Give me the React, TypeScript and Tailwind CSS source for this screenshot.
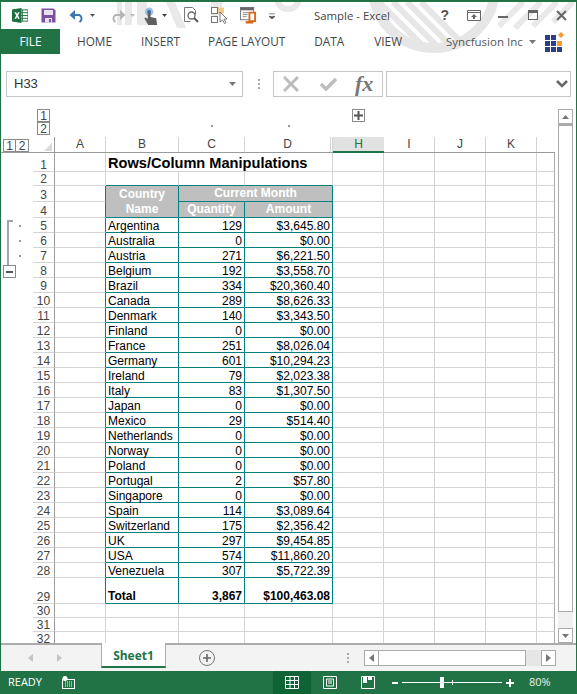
import React from 'react';

const uiFont = "font-['Open_Sans','Noto_Sans',sans-serif]";
const GRID = 'grid grid-rows-[minmax(0,1fr)] grid-cols-[32px_22px_51px_73px_66px_88px_51px_51px_51px_51px_18px]';

const countries: [string, string, string][] = [
  ['Argentina', '129', '$3,645.80'],
  ['Australia', '0', '$0.00'],
  ['Austria', '271', '$6,221.50'],
  ['Belgium', '192', '$3,558.70'],
  ['Brazil', '334', '$20,360.40'],
  ['Canada', '289', '$8,626.33'],
  ['Denmark', '140', '$3,343.50'],
  ['Finland', '0', '$0.00'],
  ['France', '251', '$8,026.04'],
  ['Germany', '601', '$10,294.23'],
  ['Ireland', '79', '$2,023.38'],
  ['Italy', '83', '$1,307.50'],
  ['Japan', '0', '$0.00'],
  ['Mexico', '29', '$514.40'],
  ['Netherlands', '0', '$0.00'],
  ['Norway', '0', '$0.00'],
  ['Poland', '0', '$0.00'],
  ['Portugal', '2', '$57.80'],
  ['Singapore', '0', '$0.00'],
  ['Spain', '114', '$3,089.64'],
  ['Switzerland', '175', '$2,356.42'],
  ['UK', '297', '$9,454.85'],
  ['USA', '574', '$11,860.20'],
  ['Venezuela', '307', '$5,722.39'],
];

function Caret({ className = '' }: { className?: string }) {
  return (
    <svg width="7" height="4" viewBox="0 0 7 4" className={className}>
      <path d="M0 0h7L3.500 4z" fill="currentColor" />
    </svg>
  );
}

function Watermark() {
  return (
    <svg width="575" height="52" viewBox="0 0 575 52" className="absolute left-0 top-0">
      <defs>
        <clipPath id="ring">
          <circle cx="433" cy="-15" r="58" />
        </clipPath>
      </defs>
      <g fill="#e9e9e9">
        <rect x="116" y="0" width="5" height="23" />
        <rect x="124" y="0" width="7" height="23" />
        <rect x="136" y="0" width="10" height="23" />
        <path d="M165 0h9l11 26h-9zM210 0h12l-6 18h-6z" />
      </g>
      <circle cx="287" cy="-4" r="11" fill="none" stroke="#e9e9e9" strokeWidth="6" />
      <circle cx="433" cy="-15" r="61" fill="none" stroke="#e6e6e6" strokeWidth="10" />
      <g clipPath="url(#ring)" stroke="#e6e6e6" strokeWidth="6">
        <path d="M378 0l50 50M392 0l50 50M406 0l50 50M420 0l50 50" />
      </g>
      <g stroke="#e9e9e9" strokeWidth="6">
        <path d="M522 0l-24 24M540 0l-26 26M556 0l-24 24M572 0l-20 20" />
      </g>
    </svg>
  );
}

function TitleBar() {
  return (
    <div className="relative z-10 h-[27px] flex items-center text-[#444]">
      <div className="flex items-center pl-[11px]">
        {/* excel logo */}
        <svg width="16" height="15" viewBox="0 0 17 16">
          <rect x="6" y="2" width="11" height="12" fill="#fff" stroke="#217346" />
          <path d="M11 2v12M6 5h11M6 8h11M6 11h11" stroke="#217346" strokeWidth="1" />
          <path d="M0 1.500L10 0v16L0 14.500z" fill="#1d6f42" />
          <path d="M2.600 4.500h1.800l1 2.100 1-2.100h1.700L6.400 8l1.800 3.500H6.400l-1-2.200-1 2.200H2.600L4.500 8z" fill="#fff" />
        </svg>
        <svg width="15" height="15" viewBox="0 0 15 15" className="ml-[13px]">
          <path d="M0.500 0.500h12l2 2v12h-14z" fill="#7c4f9f" />
          <rect x="3" y="2" width="9" height="5" fill="#e9e0f0" />
          <rect x="4" y="10" width="7" height="4.500" fill="#e9e0f0" />
          <rect x="8" y="11" width="2" height="3" fill="#7c4f9f" />
        </svg>
        <svg width="16" height="14" viewBox="0 0 16 14" className="ml-[13px]">
          <path d="M4 6h6.500a4 4 0 0 1 0 7" fill="none" stroke="#3a78b5" strokeWidth="2" />
          <path d="M0.500 6L6 1v10z" fill="#3a78b5" />
        </svg>
        <Caret className="ml-[5px] w-[5px] h-[3px] text-[#555]" />
        <svg width="16" height="14" viewBox="0 0 16 14" className="ml-[15px]">
          <path d="M12 6H5.500a4 4 0 0 0 0 7" fill="none" stroke="#b5b5b5" strokeWidth="2" />
          <path d="M15.500 6L10 1v10z" fill="#b5b5b5" />
        </svg>
        <Caret className="ml-[4px] w-[5px] h-[3px] text-[#bbb]" />
        <svg width="16" height="18" viewBox="0 0 16 19" className="ml-[8px]">
          <circle cx="6" cy="5" r="4.500" fill="#9cc3e6" />
          <circle cx="6" cy="5" r="2" fill="#3a78b5" />
          <path d="M4.500 5h3v5.500l6 1.500 1 7H5L1 12l1-1 2.500 1.500z" fill="#5f5f5f" />
        </svg>
        <Caret className="ml-[3px] w-[5px] h-[3px] text-[#444]" />
        {/* print preview */}
        <svg width="15" height="17" viewBox="0 0 15 17" className="ml-[17px]">
          <path d="M0.500 0.500h8l3 3v4M0.500 0.500v14h6" fill="none" stroke="#777" />
          <circle cx="7.500" cy="8.500" r="3.500" fill="#fff" stroke="#666" strokeWidth="1.300" />
          <path d="M10 11l4 4" stroke="#555" strokeWidth="2" />
        </svg>
        {/* select cells */}
        <svg width="17" height="17" viewBox="0 0 17 17" className="ml-[12px]">
          <rect x="0.500" y="0.500" width="6" height="6" fill="#fff" stroke="#777" />
          <rect x="0.500" y="9.500" width="6" height="6" fill="#fff" stroke="#777" />
          <rect x="7" y="0.500" width="6" height="6" fill="#f4c98d" />
          <path d="M9 5v10l2.500-2 2 3.500 1.500-1-2-3.200 3-.3z" fill="#fff" stroke="#555" strokeWidth="0.800" />
        </svg>
        {/* form */}
        <svg width="17" height="17" viewBox="0 0 18 18" className="ml-[12px]">
          <rect x="0.500" y="0.500" width="14" height="13" fill="#fff" stroke="#777" />
          <rect x="0.500" y="0.500" width="14" height="3" fill="#666" />
          <path d="M3 6h6M3 8h5M3 10h4" stroke="#888" />
          <path d="M10 6h6v9h-6z" fill="#fff" stroke="#d9671c" strokeWidth="2" />
          <path d="M6 15h8v2.500H6z" fill="#d9671c" />
        </svg>
        <svg width="6" height="6" viewBox="0 0 7 7" className="ml-[12px] text-[#555]">
          <path d="M0 1h7M0 4h7L3.500 7z" stroke="currentColor" fill="currentColor" strokeWidth="0.800" />
        </svg>
      </div>
      <span className={`absolute left-[313px] top-[6px] text-[11.4px] leading-4 text-[#444] ${uiFont}`}>Sample - Excel</span>
      <span className="absolute right-[127px] top-[3px] text-[14px] font-bold text-[#555] font-['Liberation_Sans',sans-serif]">?</span>
      <svg width="14" height="11" viewBox="0 0 14 11" className="absolute right-[95px] top-[8px]">
        <path d="M0.500 0.500h13v10h-13zM0.500 2.500h13" fill="none" stroke="#666" />
        <path d="M7 4l-3 3h2v2h2V7h2z" fill="#666" />
      </svg>
      <div className="absolute right-[68px] top-[14px] w-[10px] h-[2px] bg-[#666]" />
      <div className="absolute right-[38px] top-[8px] w-[10px] h-[10px] border border-t-[3px] border-[#666]" />
      <svg width="11" height="11" viewBox="0 0 11 11" className="absolute right-[9px] top-[8px]">
        <path d="M1 1l9 9M10 1l-9 9" stroke="#666" strokeWidth="2" />
      </svg>
    </div>
  );
}

function RibbonTabs() {
  return (
    <div className={`relative z-10 h-[25px] flex items-center text-[11.8px] text-[#444] ${uiFont}`}>
      <div className="w-[59px] h-full bg-[#217346] text-white flex items-center justify-center">FILE</div>
      <span className="ml-[17px]">HOME</span>
      <span className="ml-[29px]">INSERT</span>
      <span className="ml-[28px]">PAGE LAYOUT</span>
      <span className="ml-[29px]">DATA</span>
      <span className="ml-[30px]">VIEW</span>
      <span className="ml-[44px] text-[11.5px] text-[#555]">Syncfusion Inc</span>
      <Caret className="ml-[6px] text-[#777]" />
      <svg width="20" height="20" viewBox="0 0 20 20" className="ml-[9px]">
        <path d="M0 3h5v5H0zM6 3h5v5H6zM0 9h5v5H0zM6 9h5v5H6zM0 15h5v5H0zM6 15h5v5H6zM12 15h5v5h-5z" fill="#2a3f86" />
        <path d="M12 9h5v5h-5z" fill="#f39c2a" />
        <path d="M16 0l3 3-3 3-3-3z" fill="#f39c2a" />
      </svg>
    </div>
  );
}

function FormulaBar() {
  return (
    <div className="h-[26px] mt-[17px] flex text-[#444]">
      <div className="ml-[5px] w-[237px] border border-[#c6c6c6] flex items-center justify-between pl-[7px] pr-[6px]">
        <span className="text-[13px] text-[#333] font-['Liberation_Sans',sans-serif]">H33</span>
        <Caret className="text-[#777]" />
      </div>
      <div className="ml-[14px] w-[3px] flex flex-col items-center justify-center gap-[2px]">
        <div className="w-[2px] h-[2px] bg-[#aaa]" />
        <div className="w-[2px] h-[2px] bg-[#aaa]" />
        <div className="w-[2px] h-[2px] bg-[#aaa]" />
      </div>
      <div className="ml-[13px] w-[110px] border border-[#c6c6c6] flex items-center">
        <svg width="16" height="16" viewBox="0 0 16 16" className="ml-[9px]">
          <path d="M1 1l14 14M15 1L1 15" stroke="#bdbdbd" strokeWidth="3" />
        </svg>
        <svg width="19" height="15" viewBox="0 0 19 15" className="ml-[20px]">
          <path d="M2 7l5 5L17 2" fill="none" stroke="#bdbdbd" strokeWidth="3.500" />
        </svg>
        <span className="ml-[17px] text-[22px] leading-none italic font-bold text-[#777] font-['Liberation_Serif',serif]">fx</span>
      </div>
      <div className="ml-[3px] w-[185px] border border-[#c6c6c6] flex items-center justify-end pr-[2px]">
        <svg width="12" height="8" viewBox="0 0 12 8">
          <path d="M1 1l5 5 5-5" fill="none" stroke="#666" strokeWidth="2.500" />
        </svg>
      </div>
    </div>
  );
}

const line = 'border-r border-b border-[#d4d4d4]';
const edge = 'border-b border-b-[#d4d4d4] border-r border-r-[#008080]';
const teal = 'border-r border-r-[#008080] border-b border-b-[#008080]';

function RowHead({ n }: { n: number }) {
  return (
    <div className="border-r border-r-[#9b9b9b] border-b border-b-[#d4d4d4] flex items-end justify-center text-[12px] leading-[12px] text-[#444]">
      {n}
    </div>
  );
}

function Blanks() {
  return (
    <>
      <div className={line} />
      <div className={line} />
      <div className={line} />
      <div className={line} />
      <div className="border-b border-b-[#d4d4d4] border-r border-r-[#ababab]" />
    </>
  );
}

function ColHead({ label, className = '' }: { label: string; className?: string }) {
  return <div className={`border-r border-[#d4d4d4] text-center text-[12px] leading-[15px] text-[#444] ${className}`}>{label}</div>;
}

function Gutter({ dot, minus }: { dot?: boolean; minus?: boolean }) {
  return (
    <div className="relative flex items-center justify-end">
      {dot && <div className="mr-[12px] w-[2px] h-[2px] bg-[#999]" />}
      {minus && (
        <div className="absolute left-[2px] top-[2px] w-[13px] h-[13px] border border-[#8a8a8a] flex items-center justify-center">
          <div className="w-[7px] h-[2px] bg-[#555]" />
        </div>
      )}
    </div>
  );
}

function Sheet() {
  return (
    <div className="w-[554px] h-full overflow-hidden font-['Liberation_Sans',sans-serif] text-[12px] text-black">
      {/* column outline levels */}
      <div className={`${GRID} h-[28px]`}>
        <div className="col-span-2 flex flex-col items-end pr-[5px]">
          <div className="w-[13px] h-[13px] border border-[#8a8a8a] text-[12px] leading-[12px] text-center text-[#444]">1</div>
          <div className="w-[13px] h-[13px] border border-[#8a8a8a] text-[12px] leading-[12px] text-center text-[#444]">2</div>
        </div>
        <div />
        <div />
        <div className="flex items-end justify-center pb-[10px]"><div className="w-[2px] h-[2px] bg-[#999]" /></div>
        <div className="flex items-end justify-center pb-[10px]"><div className="w-[2px] h-[2px] bg-[#999]" /></div>
        <div>
          <div className="w-[13px] h-[13px] ml-[19px] border border-[#8a8a8a] flex items-center justify-center">
            <svg width="9" height="9" viewBox="0 0 9 9"><path d="M4.500 0v9M0 4.500h9" stroke="#555" strokeWidth="2" /></svg>
          </div>
        </div>
      </div>
      {/* column headers */}
      <div className={`${GRID} h-[16px] border-b border-[#9b9b9b]`}>
        <div className="flex items-start pl-[2px] pt-[2px]">
          <div className="w-[13px] h-[13px] border border-[#8a8a8a] text-[12px] leading-[12px] text-center text-[#444]">1</div>
          <div className="w-[13px] h-[13px] border border-l-0 border-[#8a8a8a] text-[12px] leading-[12px] text-center text-[#444]">2</div>
        </div>
        <div className="relative border-r border-[#9b9b9b]">
          <svg width="8" height="8" viewBox="0 0 8 8" className="absolute right-[2px] bottom-[1px]"><path d="M8 0v8H0z" fill="#dadada" /></svg>
        </div>
        <ColHead label="A" />
        <ColHead label="B" />
        <ColHead label="C" />
        <ColHead label="D" className="border-r-[3px] border-double" />
        <div className="bg-[#e1e1e1] border-b-2 border-[#217346] h-[16px] text-center text-[12px] leading-[15px] text-[#217346]">H</div>
        <ColHead label="I" />
        <ColHead label="J" />
        <ColHead label="K" />
        <div />
      </div>
      {/* row 1 */}
      <div className={`${GRID} h-[19px]`}>
        <div />
        <RowHead n={1} />
        <div className={line} />
        <div className="col-span-3 border-b border-r border-[#d4d4d4] pl-[2px] text-[14.6px] font-bold leading-[20px] whitespace-nowrap">Rows/Column Manipulations</div>
        <Blanks />
      </div>
      {/* row 2 */}
      <div className={`${GRID} h-[14px]`}>
        <div />
        <RowHead n={2} />
        <div className={line} />
        <div className="border-r border-r-[#d4d4d4] border-b border-b-[#008080]" />
        <div className="border-r border-r-[#d4d4d4] border-b border-b-[#008080]" />
        <div className="border-r border-r-[#d4d4d4] border-b border-b-[#008080]" />
        <Blanks />
      </div>
      {/* rows 3 and 4 */}
      <div className={`${GRID} h-[16px]`}>
        <div />
        <RowHead n={3} />
        <div className={edge} />
        <div className="bg-[#bfbfbf] border-r border-r-[#008080] text-center text-white font-bold leading-[16px]">Country</div>
        <div className={`col-span-2 bg-[#bfbfbf] ${teal} text-center text-white font-bold leading-[15px]`}>Current Month</div>
        <Blanks />
      </div>
      <div className={`${GRID} h-[16px]`}>
        <div />
        <RowHead n={4} />
        <div className={edge} />
        <div className={`bg-[#bfbfbf] ${teal} text-center text-white font-bold leading-[15px]`}>Name</div>
        <div className={`bg-[#bfbfbf] ${teal} text-center text-white font-bold leading-[15px]`}>Quantity</div>
        <div className={`bg-[#bfbfbf] ${teal} text-center text-white font-bold leading-[15px]`}>Amount</div>
        <Blanks />
      </div>
      {/* data rows */}
      <div className="relative">
        <div className="absolute left-[6px] top-[2px] w-[6px] h-[45px] border-l-2 border-t-2 border-[#a6a6a6]" />
        {countries.map((c, i) => (
          <div key={c[0]} className={`${GRID} h-[15px]`}>
            <Gutter dot={i < 3} minus={i === 3} />
            <RowHead n={i + 5} />
            <div className={edge} />
            <div className={`${teal} pl-[2px] leading-[16px] whitespace-nowrap`}>{c[0]}</div>
            <div className={`${teal} pr-[2px] leading-[16px] text-right`}>{c[1]}</div>
            <div className={`${teal} pr-[2px] leading-[16px] text-right`}>{c[2]}</div>
            <Blanks />
          </div>
        ))}
      </div>
      {/* total */}
      <div className={`${GRID} h-[26px]`}>
        <div />
        <RowHead n={29} />
        <div className={edge} />
        <div className={`${teal} pl-[2px] pt-[11px] leading-[15px] font-bold`}>Total</div>
        <div className={`${teal} pr-[2px] pt-[11px] leading-[15px] text-right font-bold`}>3,867</div>
        <div className={`${teal} pr-[2px] pt-[11px] leading-[15px] text-right font-bold`}>$100,463.08</div>
        <Blanks />
      </div>
      {[30, 31, 32].map(n => (
        <div key={n} className={`${GRID} h-[14px]`}>
          <div />
          <RowHead n={n} />
          <div className={line} />
          <div className={line} />
          <div className={line} />
          <div className={line} />
          <Blanks />
        </div>
      ))}
    </div>
  );
}

function VScroll() {
  return (
    <div className="ml-[3px] w-[15px] h-[534px] flex flex-col">
      <div className="h-[15px] border border-[#ababab] flex items-center justify-center text-[#777]">
        <Caret className="rotate-180" />
      </div>
      <div className="h-[488px] border border-t-2 border-[#ababab]" />
      <div className="flex-1 bg-[#f0f0f0]" />
      <div className="h-[15px] border border-[#ababab] flex items-center justify-center text-[#777]">
        <Caret />
      </div>
    </div>
  );
}

function SheetTabs() {
  return (
    <div className="h-[28px] border-t-2 border-[#ababab] bg-[#f3f3f3] flex">
      <div className="w-[100px] flex items-center pl-[27px] gap-[24px] text-[#c4c4c4]">
        <svg width="5" height="8" viewBox="0 0 5 8"><path d="M5 0v8L0 4z" fill="currentColor" /></svg>
        <svg width="5" height="8" viewBox="0 0 5 8"><path d="M0 0v8l5-4z" fill="currentColor" /></svg>
      </div>
      <div className={`w-[65px] mt-[-2px] h-[25px] pt-[3px] bg-white border-x border-[#ababab] border-b-2 border-b-[#217346] flex items-center justify-center text-[12px] font-bold text-[#217346] ${uiFont}`}>
        Sheet1
      </div>
      <div className="ml-[33px] flex items-center">
        <div className="w-[16px] h-[16px] rounded-full border border-[#777] flex items-center justify-center">
          <svg width="8" height="8" viewBox="0 0 8 8"><path d="M4 0v8M0 4h8" stroke="#666" strokeWidth="1.600" /></svg>
        </div>
      </div>
      <div className="ml-[132px] flex flex-col justify-center gap-[2px]">
        <div className="w-[2px] h-[2px] bg-[#aaa]" />
        <div className="w-[2px] h-[2px] bg-[#aaa]" />
        <div className="w-[2px] h-[2px] bg-[#aaa]" />
      </div>
      <div className="ml-[15px] mt-[5px] h-[16px] w-[192px] flex">
        <div className="w-[15px] border border-[#ababab] bg-white flex items-center justify-center">
          <svg width="5" height="8" viewBox="0 0 5 8"><path d="M5 0v8L0 4z" fill="#777" /></svg>
        </div>
        <div className="w-[147px] border-y border-r border-[#ababab] bg-white" />
        <div className="w-[15px] bg-[#e6e6e6]" />
        <div className="w-[15px] border border-[#ababab] bg-white flex items-center justify-center">
          <svg width="5" height="8" viewBox="0 0 5 8"><path d="M0 0v8l5-4z" fill="#777" /></svg>
        </div>
      </div>
    </div>
  );
}

function StatusBar() {
  return (
    <div className={`h-[23px] bg-[#217346] flex items-center text-white text-[11px] ${uiFont}`}>
      <span className="ml-[7px] w-[54px]">READY</span>
      <svg width="13" height="13" viewBox="0 0 13 13">
        <rect x="0.500" y="3.500" width="12" height="9" fill="none" stroke="#fff" />
        <circle cx="3" cy="2.500" r="2.500" fill="#fff" />
        <path d="M3 6h7M3 8h7M3 10h7" stroke="#fff" strokeDasharray="1 1" />
      </svg>
      <div className="ml-[198px] w-[38px] h-full bg-[#0f6435] flex items-center justify-center">
        <svg width="14" height="13" viewBox="0 0 14 13"><path d="M.5.500h13v12H.500zM5 .5v12M9.500.5v12M.5 4.500h13M.5 8.500h13" fill="none" stroke="#fff" /></svg>
      </div>
      <svg width="14" height="13" viewBox="0 0 14 13" className="ml-[12px]">
        <path d="M.5.500h13v12H.500z" fill="none" stroke="#fff" />
        <path d="M3.500 3h7v7h-7zM5 5h4M5 7h4" fill="none" stroke="#fff" />
      </svg>
      <svg width="14" height="13" viewBox="0 0 14 13" className="ml-[24px]">
        <path d="M.5.500h13v12H.500z" fill="none" stroke="#fff" />
        <path d="M2 0h4v7H2zM7 0h4v4H7z" fill="#fff" />
      </svg>
      <div className="ml-[17px] w-[6px] h-[2px] bg-white" />
      <div className="relative ml-[4px] w-[100px] h-[1px] bg-white">
        <div className="absolute left-[38px] top-[-5px] w-[4px] h-[11px] bg-white" />
        <div className="absolute left-[50px] top-[-2px] w-[1px] h-[5px] bg-white" />
      </div>
      <svg width="8" height="8" viewBox="0 0 8 8" className="ml-[4px]"><path d="M4 0v8M0 4h8" stroke="#fff" strokeWidth="2" /></svg>
      <span className="ml-[15px] text-[11px] text-[#e6f0ea]">80%</span>
    </div>
  );
}

export default function App() {
  return (
    <div className="w-[577px] h-[694px] flex flex-col bg-white border-x border-t-2 border-[#217346] overflow-hidden">
      <div className="relative">
        <Watermark />
        <TitleBar />
        <RibbonTabs />
      </div>
      <FormulaBar />
      <div className="mt-[12px] h-[534px] flex">
        <Sheet />
        <VScroll />
      </div>
      <SheetTabs />
      <StatusBar />
    </div>
  );
}
